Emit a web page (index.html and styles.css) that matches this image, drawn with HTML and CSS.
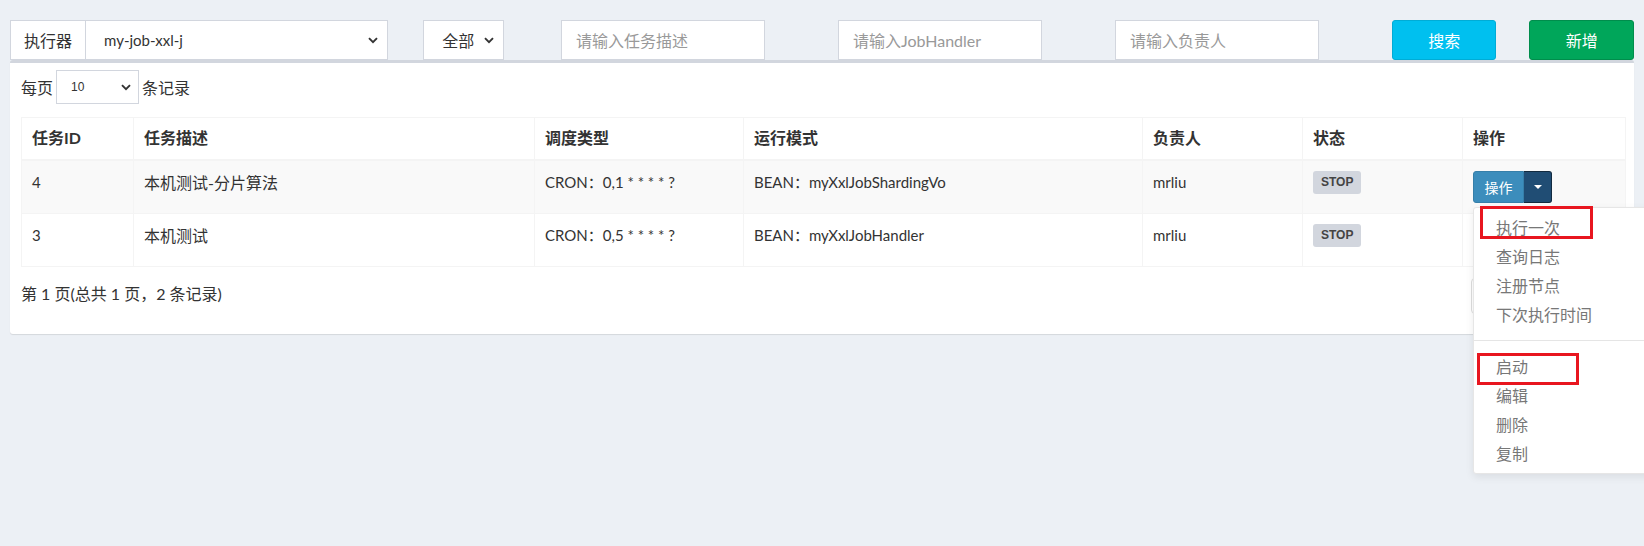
FILE: index.html
```html
<!DOCTYPE html>
<html lang="zh-CN">
<head>
<meta charset="utf-8">
<title>任务管理</title>
<link rel="stylesheet" href="styles.css">
</head>
<body>
<div class="page">
  <div class="toolbar">
    <div class="exec-group">
      <span class="addon">执行器</span>
      <div class="select exec-select"><span class="latin">my-job-xxl-j</span><svg class="chev" width="10" height="7" viewBox="0 0 10 7"><path d="M1 1.2 L5 5.2 L9 1.2" fill="none" stroke="#333" stroke-width="1.9"/></svg></div>
    </div>
    <div class="select status-select"><span>全部</span><svg class="chev" width="10" height="7" viewBox="0 0 10 7"><path d="M1 1.2 L5 5.2 L9 1.2" fill="none" stroke="#333" stroke-width="1.9"/></svg></div>
    <input class="field f-desc" type="text" placeholder="请输入任务描述">
    <input class="field f-handler" type="text" placeholder="请输入JobHandler">
    <input class="field f-author" type="text" placeholder="请输入负责人">
    <button class="btn btn-search">搜索</button>
    <button class="btn btn-add">新增</button>
  </div>

  <div class="box">
    <div class="length">
      <span>每页</span>
      <div class="select len-select"><span>10</span><svg class="chev" width="10" height="7" viewBox="0 0 10 7"><path d="M1 1.2 L5 5.2 L9 1.2" fill="none" stroke="#333" stroke-width="1.9"/></svg></div>
      <span>条记录</span>
    </div>

    <table class="grid">
      <colgroup>
        <col class="c-id"><col class="c-desc"><col class="c-type"><col class="c-mode"><col class="c-author"><col class="c-status"><col class="c-op">
      </colgroup>
      <thead>
        <tr><th>任务ID</th><th>任务描述</th><th>调度类型</th><th>运行模式</th><th>负责人</th><th>状态</th><th>操作</th></tr>
      </thead>
      <tbody>
        <tr class="odd">
          <td class="latin">4</td>
          <td>本机测试-分片算法</td>
          <td class="latin">CRON：0,1 * * * * ?</td>
          <td class="latin">BEAN：myXxlJobShardingVo</td>
          <td class="latin">mrliu</td>
          <td><span class="label">STOP</span></td>
          <td>
            <div class="btn-group">
              <button class="op-btn">操作</button><button class="op-caret"><span class="caret"></span></button>
              <ul class="menu">
                <li>执行一次</li>
                <li>查询日志</li>
                <li>注册节点</li>
                <li>下次执行时间</li>
                <li class="divider"></li>
                <li>启动</li>
                <li>编辑</li>
                <li>删除</li>
                <li>复制</li>
                <span class="mark mark-1"></span>
                <span class="mark mark-2"></span>
              </ul>
            </div>
          </td>
        </tr>
        <tr>
          <td class="latin">3</td>
          <td>本机测试</td>
          <td class="latin">CRON：0,5 * * * * ?</td>
          <td class="latin">BEAN：myXxlJobHandler</td>
          <td class="latin">mrliu</td>
          <td><span class="label">STOP</span></td>
          <td>
            <div class="btn-group covered">
              <button class="op-btn">操作</button><button class="op-caret"><span class="caret"></span></button>
            </div>
          </td>
        </tr>
      </tbody>
    </table>

    <div class="footer">
      <div class="info">第 1 页(总共 1 页，2 条记录)</div>
      <ul class="pagination">
        <li><span>上页</span></li><li class="active"><span>1</span></li><li><span>下页</span></li>
      </ul>
    </div>
  </div>
</div>
</body>
</html>
```

FILE: styles.css
```css
html, body {
  margin: 0;
  padding: 0;
  overflow: hidden;
}
body {
  background: #ecf0f5;
  font-family: "Lato", "Noto Sans CJK SC", sans-serif;
  font-size: 16px;
  color: #333;
  width: 1644px;
  height: 546px;
}
.page {
  padding: 20px 10px 0 10px;
}
.latin {
  font-size: 15px;
}

/* toolbar */
.toolbar {
  display: flex;
  align-items: stretch;
  height: 40px;
}
.exec-group {
  display: flex;
  width: 380px;
}
.addon {
  display: flex;
  align-items: center;
  flex: none;
  white-space: nowrap;
  padding: 0 13px;
  background: #fff;
  border: 1px solid #d2d6de;
  border-right: 0;
  color: #333;
}
.select {
  display: flex;
  align-items: center;
  justify-content: space-between;
  background: #fff;
  border: 1px solid #d2d6de;
  box-sizing: border-box;
  color: #333;
  white-space: nowrap;
}
.exec-select {
  flex: 1;
  padding: 0 9px 0 18px;
}
.status-select {
  width: 81px;
  margin-left: 35px;
  padding: 0 9px 0 18px;
}
.chev {
  display: block;
  flex: none;
}
.field {
  width: 204px;
  box-sizing: border-box;
  border: 1px solid #d2d6de;
  background: #fff;
  padding: 0 14px;
  font-family: inherit;
  font-size: 16px;
  color: #555;
  outline: none;
  margin: 0;
}
.field::placeholder {
  color: #999;
}
.f-desc { margin-left: 57px; }
.f-handler, .f-author { margin-left: 73px; }
.btn {
  width: 105px;
  border-radius: 3px;
  font-family: inherit;
  font-size: 16px;
  color: #fff;
  cursor: pointer;
  padding: 0;
}
.btn-search {
  margin-left: 73px;
  background: #00c0ef;
  border: 1px solid #00acd6;
}
.btn-add {
  margin-left: 33px;
  background: #00a65a;
  border: 1px solid #008d4c;
}

/* box */
.box {
  background: #fff;
  border-top: 3px solid #d2d6de;
  border-radius: 3px;
  box-shadow: 0 1px 1px rgba(0, 0, 0, 0.1);
  padding: 7px 9px 20px 11px;
}
.length {
  display: flex;
  align-items: center;
  gap: 3px;
  height: 34px;
}
.len-select {
  width: 83px;
  height: 34px;
  padding: 0 7px 0 14px;
  font-size: 12px;
}
.len-select span {
  font-family: "Liberation Sans", Arial, sans-serif;
}

/* table */
.grid {
  margin-top: 13px;
  width: 100%;
  border-collapse: collapse;
  table-layout: fixed;
  border: 1px solid #f4f4f4;
}
.c-id { width: 112px; }
.c-desc { width: 401px; }
.c-type { width: 209px; }
.c-mode { width: 399px; }
.c-author { width: 160px; }
.c-status { width: 160px; }
.c-op { width: 163px; }
.grid th {
  text-align: left;
  font-weight: bold;
  padding: 8px 10px 10px;
  line-height: 23px;
  border: 1px solid #f4f4f4;
  border-bottom: 2px solid #f4f4f4;
  color: #333;
}
.grid td {
  padding: 10px;
  line-height: 23px;
  vertical-align: top;
  border: 1px solid #f4f4f4;
  height: 32px;
  color: #333;
}
.grid tr.odd td {
  background: #f9f9f9;
}
.label {
  display: inline-block;
  background: #d2d6de;
  color: #444;
  font-weight: bold;
  font-size: 12px;
  line-height: 15px;
  padding: 4px 8px 4px;
  border-radius: 3px;
  vertical-align: top;
  font-family: "Liberation Sans", Arial, sans-serif;
}

/* action buttons */
.btn-group {
  position: relative;
  display: inline-flex;
  vertical-align: top;
}
.btn-group.covered {
  visibility: hidden;
}
.op-btn {
  height: 32px;
  width: 51px;
  padding: 0;
  font-family: inherit;
  font-size: 14px;
  color: #fff;
  background: #3c8dbc;
  border: 1px solid #367fa9;
  border-radius: 3px 0 0 3px;
}
.op-caret {
  height: 32px;
  width: 28px;
  padding: 0;
  background: #204d74;
  border: 1px solid #122b40;
  border-left: 0;
  border-radius: 0 3px 3px 0;
  display: flex;
  align-items: center;
  justify-content: center;
}
.caret {
  width: 0;
  height: 0;
  border-top: 4px solid #fff;
  border-left: 4px solid transparent;
  border-right: 4px solid transparent;
}

/* dropdown menu */
.menu {
  position: absolute;
  z-index: 10;
  top: 36px;
  left: 0;
  width: 200px;
  margin: 0;
  padding: 5px 0;
  list-style: none;
  background: #fff;
  border: 1px solid #e6e6e6;
  border-radius: 3px;
  box-shadow: 0 3px 8px rgba(0, 0, 0, 0.08);
}
.menu li {
  padding: 3px 22px;
  line-height: 23px;
  color: #777;
  font-size: 16px;
  white-space: nowrap;
}
.menu li.divider {
  padding: 0;
  height: 1px;
  margin: 11px 0;
  background: #e5e5e5;
}
.mark {
  position: absolute;
  border: 3px solid #e8161f;
  box-sizing: border-box;
}
.mark-1 {
  left: 6px;
  top: -2px;
  width: 113px;
  height: 33px;
}
.mark-2 {
  left: 3px;
  top: 145px;
  width: 102px;
  height: 32px;
}

/* footer */
.footer {
  display: flex;
  justify-content: space-between;
  align-items: flex-start;
  margin-top: 11px;
}
.info {
  line-height: 23px;
  padding-top: 4px;
  color: #333;
}
.pagination {
  display: flex;
  margin: 0;
  padding: 0;
  list-style: none;
}
.pagination li {
  height: 36px;
  line-height: 34px;
  box-sizing: border-box;
  min-width: 52px;
  text-align: center;
  border: 1px solid #ddd;
  margin-left: -1px;
  color: #777;
  font-size: 14px;
}
.pagination li span {
  visibility: hidden;
}
.pagination li:first-child {
  border-radius: 4px 0 0 4px;
}
.pagination li:last-child {
  border-radius: 0 4px 4px 0;
}
.pagination li.active {
  background: #3c8dbc;
  border-color: #367fa9;
}
```
